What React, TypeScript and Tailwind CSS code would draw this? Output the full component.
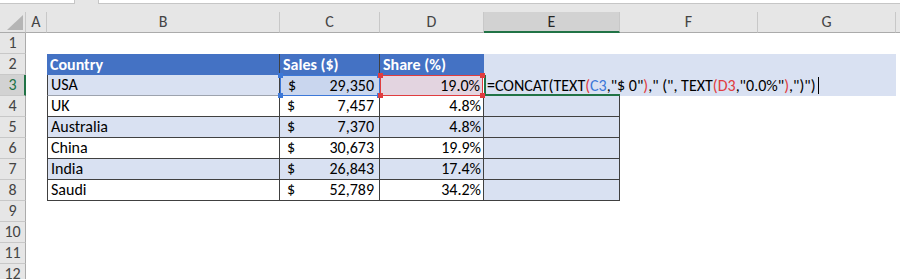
import type { ReactNode } from "react";

type Row = { country: string; sales: string; share: string };

const rows: Row[] = [
  { country: "USA", sales: "29,350", share: "19.0%" },
  { country: "UK", sales: "7,457", share: "4.8%" },
  { country: "Australia", sales: "7,370", share: "4.8%" },
  { country: "China", sales: "30,673", share: "19.9%" },
  { country: "India", sales: "26,843", share: "17.4%" },
  { country: "Saudi", sales: "52,789", share: "34.2%" },
];

// grid row n (1-based) -> class
const ROW = [
  "",
  "row-start-1",
  "row-start-2",
  "row-start-3",
  "row-start-4",
  "row-start-5",
  "row-start-6",
  "row-start-7",
  "row-start-8",
  "row-start-9",
  "row-start-10",
  "row-start-11",
  "row-start-12",
  "row-start-13",
];

const COL = [
  "",
  "col-start-1",
  "col-start-2",
  "col-start-3",
  "col-start-4",
  "col-start-5",
  "col-start-6",
  "col-start-7",
  "col-start-8",
  "col-start-9",
];

const letters = ["A", "B", "C", "D", "E", "F", "G"];

const Handles = ({ color }: { color: string }) => (
  <>
    <span className={`absolute -left-[3px] -top-[3px] z-20 h-[5px] w-[5px] ${color}`} />
    <span className={`absolute -right-[3px] -top-[3px] z-20 h-[5px] w-[5px] ${color}`} />
    <span className={`absolute -bottom-[3px] -left-[3px] z-20 h-[5px] w-[5px] ${color}`} />
    <span className={`absolute -bottom-[3px] -right-[3px] z-20 h-[5px] w-[5px] ${color}`} />
  </>
);

const Dollar = ({ value }: { value: string }) => (
  <div className="flex w-full items-center justify-between pl-[7px] pr-[5px]">
    <span>$</span>
    <span>{value}</span>
  </div>
);

const Seg = ({ c, children }: { c?: string; children: ReactNode }) => (
  <span className={c}>{children}</span>
);

export default function App() {
  return (
    <div className="h-[279px] w-[900px] overflow-hidden bg-white font-['Carlito','Lato',sans-serif] text-[16px] leading-none text-black">
      {/* formula bar remnant */}
      <div className="flex h-[12px] items-start gap-[23px] bg-[#E6E6E6]">
        <div className="h-[4px] w-[75px] border-b border-r border-[#C6C6C6] bg-white" />
        <div className="h-[4px] flex-1 border-b border-l border-[#C6C6C6] bg-white" />
      </div>

      <div className="grid grid-cols-[26px_21px_233px_100px_104px_136px_138px_138px_1fr] grid-rows-[repeat(13,21px)]">
        {/* corner */}
        <div className="col-start-1 row-start-1 flex items-end justify-end border-b border-r border-b-[#ABABAB] border-r-[#C8C8C8] bg-[#E6E6E6] pb-[2px] pr-[2px]">
          <svg width="16" height="15" viewBox="0 0 16 15">
            <polygon points="16,0 16,15 0,15" fill="#B5B5B5" />
          </svg>
        </div>

        {/* column headers */}
        {letters.map((l, i) =>
          l === "E" ? (
            <div
              key={l}
              className={`${COL[i + 2]} row-start-1 flex items-center justify-center border-b-2 border-r border-b-[#217346] border-r-[#C8C8C8] bg-[#D2D2D2] pt-[1px] text-[#262626]`}
            >
              {l}
            </div>
          ) : (
            <div
              key={l}
              className={`${COL[i + 2]} row-start-1 flex items-center justify-center border-b border-r border-b-[#ABABAB] border-r-[#C8C8C8] bg-[#E6E6E6] text-[#444]`}
            >
              {l}
            </div>
          )
        )}
        <div className="col-start-9 row-start-1 border-b border-[#ABABAB] bg-[#E6E6E6]" />

        {/* row headers */}
        {Array.from({ length: 12 }, (_, i) => i + 1).map((n) =>
          n === 3 ? (
            <div
              key={n}
              className={`${ROW[n + 1]} col-start-1 flex items-center justify-center border-b border-r-2 border-b-[#C8C8C8] border-r-[#217346] bg-[#D2D2D2] pl-[1px] text-[#217346]`}
            >
              {n}
            </div>
          ) : (
            <div
              key={n}
              className={`${ROW[n + 1]} col-start-1 flex items-center justify-center border-b border-r border-b-[#C8C8C8] border-r-[#ABABAB] bg-[#E6E6E6] text-[#444]`}
            >
              {n}
            </div>
          )
        )}

        {/* highlighted overflow area E2:G3 */}
        <div className="col-span-3 col-start-6 row-span-2 row-start-3 bg-[#D9E1F2]" />

        {/* table header */}
        <div className="col-start-3 row-start-3 flex items-center border-r border-[#404040] bg-[#4472C4] pl-[3px] font-bold text-white">
          Country
        </div>
        <div className="col-start-4 row-start-3 flex items-center border-r border-[#404040] bg-[#4472C4] pl-[3px] font-bold text-white">
          Sales ($)
        </div>
        <div className="col-start-5 row-start-3 flex items-center bg-[#4472C4] pl-[3px] font-bold text-white">
          Share (%)
        </div>

        {/* table body */}
        {rows.map((r, i) => {
          const gr = ROW[i + 4];
          const band = i % 2 === 0 ? "bg-[#D9E1F2]" : "bg-white";
          if (i === 0) {
            return [
              <div
                key="b"
                className={`${gr} col-start-3 flex items-center border-b border-l border-r border-[#404040] border-b-[#9DA3AE] ${band} pl-[3px]`}
              >
                {r.country}
              </div>,
              <div
                key="c"
                className={`${gr} relative col-start-4 flex items-center border border-[#3C78D8] bg-[#C9D6EE]`}
              >
                <Dollar value={r.sales} />
                <Handles color="bg-[#3C78D8]" />
              </div>,
              <div
                key="d"
                className={`${gr} relative col-start-5 mr-[1px] flex items-center justify-end border border-[#E03C3F] bg-[#E3D4E0] pr-[2px]`}
              >
                {r.share}
                <Handles color="bg-[#E03C3F]" />
              </div>,
              <div
                key="e"
                className={`${gr} col-start-6 border-b-2 border-l-2 border-[#217346]`}
              />,
              <div
                key="f"
                className={`${gr} z-10 col-span-3 col-start-6 flex items-center whitespace-nowrap pl-[3px]`}
              >
                <Seg>=CONCAT(TEXT</Seg>
                <Seg c="text-[#E03C3F]">(</Seg>
                <Seg c="text-[#3C78D8]">C3</Seg>
                <Seg>,"$ 0"</Seg>
                <Seg c="text-[#E03C3F]">)</Seg>
                <Seg>," (", TEXT</Seg>
                <Seg c="text-[#E03C3F]">(D3</Seg>
                <Seg>,"0.0%"</Seg>
                <Seg c="text-[#E03C3F]">)</Seg>
                <Seg>,")")</Seg>
                <span className="ml-[2px] inline-block h-[17px] w-px bg-black" />
              </div>,
            ];
          }
          return [
            <div
              key={`b${i}`}
              className={`${gr} col-start-3 flex items-center border-b border-l border-r border-[#404040] ${band} pl-[3px]`}
            >
              {r.country}
            </div>,
            <div
              key={`c${i}`}
              className={`${gr} col-start-4 flex items-center border-b border-r border-[#404040] ${band}`}
            >
              <Dollar value={r.sales} />
            </div>,
            <div
              key={`d${i}`}
              className={`${gr} col-start-5 flex items-center justify-end border-b border-r border-[#404040] ${band} pr-[2px]`}
            >
              {r.share}
            </div>,
            <div
              key={`e${i}`}
              className={`${gr} col-start-6 border-b border-r border-[#404040] bg-[#D9E1F2]`}
            />,
          ];
        })}
      </div>
    </div>
  );
}
